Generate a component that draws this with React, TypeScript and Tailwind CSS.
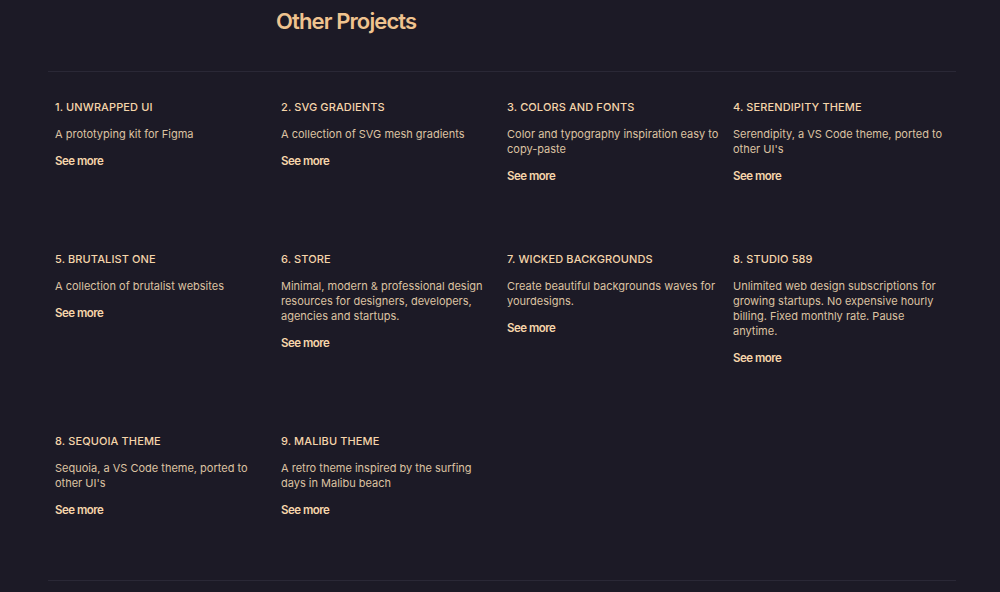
import React from "react";

type Project = { title: string; lines: string[] };

const projects: Project[][] = [
  [
    { title: "1. Unwrapped UI", lines: ["A prototyping kit for Figma"] },
    { title: "2. SVG Gradients", lines: ["A collection of SVG mesh gradients"] },
    { title: "3. Colors and fonts", lines: ["Color and typography inspiration easy to", "copy-paste"] },
    { title: "4. Serendipity theme", lines: ["Serendipity, a VS Code theme, ported to", "other UI's"] },
  ],
  [
    { title: "5. Brutalist one", lines: ["A collection of brutalist websites"] },
    { title: "6. Store", lines: ["Minimal, modern & professional design", "resources for designers, developers,", "agencies and startups."] },
    { title: "7. Wicked backgrounds", lines: ["Create beautiful backgrounds waves for", "yourdesigns."] },
    { title: "8. Studio 589", lines: ["Unlimited web design subscriptions for", "growing startups. No expensive hourly", "billing. Fixed monthly rate. Pause", "anytime."] },
  ],
  [
    { title: "8. Sequoia theme", lines: ["Sequoia, a VS Code theme, ported to", "other UI's"] },
    { title: "9. Malibu theme", lines: ["A retro theme inspired by the surfing", "days in Malibu beach"] },
  ],
];

function Card({ p }: { p: Project }) {
  return (
    <div className="pl-[7px] flex flex-col">
      <h3 className="text-[11px] leading-[16px] font-medium uppercase tracking-[0.01em] text-[#f5d5aa]">
        {p.title}
      </h3>
      <p className="mt-[12px] text-[11px] leading-[15px] tracking-[0] text-[#dcc3a2] whitespace-nowrap">
        {p.lines.map((l, i) => (
          <React.Fragment key={i}>
            {l}
            {i < p.lines.length - 1 && <br />}
          </React.Fragment>
        ))}
      </p>
      <a className="mt-[11px] text-[11.5px] leading-[16px] font-semibold tracking-[-0.045em] text-[#f6d6ab]">
        See more
      </a>
    </div>
  );
}

export default function App() {
  return (
    <div
      className="w-[1000px] h-[592px] bg-[#1c1a26] overflow-hidden"
      style={{ fontFamily: "Inter, 'Noto Sans', sans-serif" }}
    >
      <div className="ml-[48px] w-[908px]">
        <h2 className="pl-[228px] pt-[5px] h-[71px] text-[22px] leading-[32px] font-semibold tracking-[-0.04em] text-[#efc38f]">
          Other Projects
        </h2>
        <div className="border-t border-[#2a2836] pt-[27px] pb-[62px] flex flex-col gap-[67px]">
          {projects.map((row, ri) => (
            <div key={ri} className="grid grid-cols-[repeat(4,226px)]">
              {row.map((p, i) => (
                <Card key={i} p={p} />
              ))}
            </div>
          ))}
        </div>
        <div className="border-t border-[#2a2836]" />
      </div>
    </div>
  );
}
